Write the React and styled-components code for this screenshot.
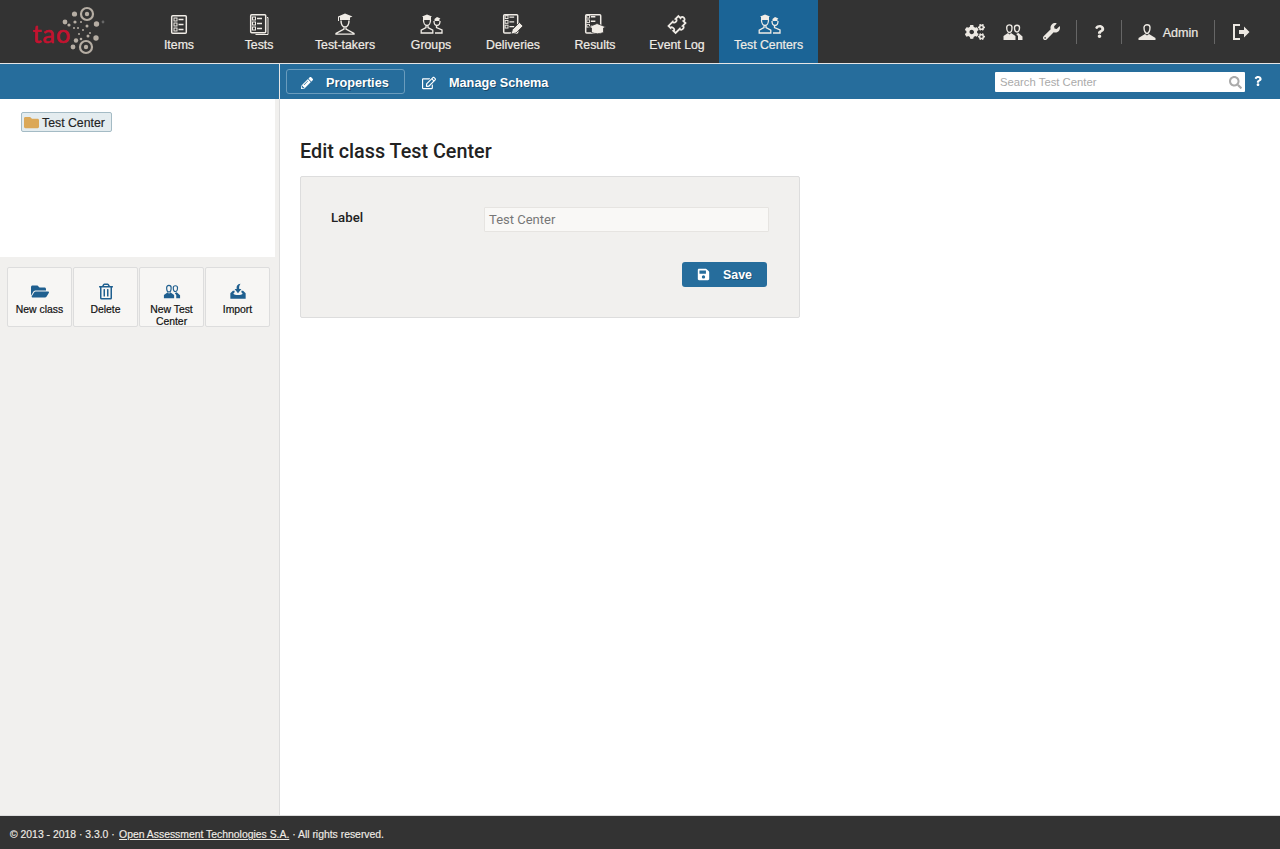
import React from 'react'
import styled, { createGlobalStyle } from 'styled-components'
import { FaCogs, FaWrench, FaQuestion, FaPencilAlt, FaRegEdit, FaSearch, FaFolder, FaFolderOpen, FaRegTrashAlt, FaSave } from 'react-icons/fa'

const Global = createGlobalStyle`
html, body { margin: 0; padding: 0; height: 100%; }
body { font-family: "Liberation Sans", Arial, sans-serif; color: #222; background: #fff; overflow: hidden; }
* { box-sizing: border-box; }
`

const Page = styled.div`
display: flex;
flex-direction: column;
height: 849px;
width: 1280px;
`
const Header = styled.header`
display: flex;
height: 64px;
flex: none;
background: #333;
border-bottom: 1px solid #e6e6e6;
`
const LogoBox = styled.div`
width: 139px;
flex: none;
padding-left: 28px;
`
const Nav = styled.nav`
display: flex;
flex: 1;
`
const NavItem = styled.div`
min-width: 80px;
width: ${props => props.w ? props.w + 'px' : 'auto'};
padding: 12px 15px 0;
display: flex;
flex-direction: column;
align-items: center;
color: #f0ece6;
font-size: 12.3px;
-webkit-text-stroke: .2px;
white-space: nowrap;
background: ${props => props.active ? '#1b6496' : 'transparent'};
svg { display: block; margin-bottom: 2px; }
`
const Tools = styled.div`
display: flex;
align-items: center;
height: 63px;
color: #ece8e2;
padding: 0 13px 0 0;
`
const Tool = styled.div`
display: flex;
align-items: center;
justify-content: center;
width: ${props => props.w}px;
height: 24px;
font-size: 12.6px;
-webkit-text-stroke: .2px;
border-right: ${props => props.sep ? '1px solid #666' : 'none'};
`
const AdminName = styled.span`
margin: 3px 0 0 7px;
`

const ActionBar = styled.div`
display: flex;
flex: none;
height: 35px;
background: #266d9c;
color: #fff;
`
const ActionLeft = styled.div`
width: 280px;
flex: none;
border-right: 1px solid #e6e6e6;
`
const Tabs = styled.div`
display: flex;
flex: 1;
align-items: center;
padding-left: 6px;
`
const Tab = styled.div`
display: flex;
align-items: center;
height: 25px;
width: ${props => props.w}px;
padding: 3px 0 0 14px;
font-size: 12.7px;
font-weight: bold;
white-space: nowrap;
border: 1px solid ${props => props.active ? '#6a9cbd' : 'transparent'};
border-radius: 3px;
margin-right: 2px;
text-shadow: 1px 1px 0 rgba(0,0,0,.35);
svg { margin-right: 13px; flex: none; }
`
const SearchBox = styled.div`
display: flex;
align-items: center;
justify-content: space-between;
width: 250px;
height: 20px;
margin: 8px 0 0;
padding: 0 3px 0 5px;
background: #fff;
border-radius: 1px;
font-size: 11.3px;
color: #aaa;
`
const HelpIcon = styled.div`
width: 26px;
margin-right: 9px;
padding-top: 12px;
display: flex;
justify-content: center;
`

const Body = styled.div`
display: flex;
flex: 1;
min-height: 0;
`
const Sidebar = styled.aside`
width: 280px;
flex: none;
background: #f1f0ee;
border-right: 1px solid #ddd;
`
const TreeArea = styled.div`
height: 158px;
width: 275px;
background: #fff;
padding: 13px 0 0 21px;
`
const TreeNode = styled.div`
display: inline-flex;
align-items: center;
width: 91px;
height: 20px;
padding: 1px 0 0 2px;
font-size: 12.3px;
-webkit-text-stroke: .15px;
color: #222;
background: #e4ecef;
border: 1px solid #a4bbc5;
border-radius: 2px;
svg { margin-right: 3px; }
`
const ActionGrid = styled.div`
display: flex;
gap: 1px;
padding: 10px 0 0 7px;
`
const ActionButton = styled.div`
width: 65px;
height: 60px;
padding-top: 15px;
display: flex;
flex-direction: column;
align-items: center;
text-align: center;
font-size: 10.4px;
-webkit-text-stroke: .2px;
line-height: 12px;
color: #111;
background: #f7f6f4;
border: 1px solid #ddd;
border-radius: 2px;
svg { flex: none; margin-bottom: 4px; height: 17px; }
`

const Main = styled.main`
flex: 1;
padding: 41px 0 0 20px;
`
const Heading = styled.h2`
margin: 0 0 12px;
font-family: Roboto, sans-serif;
font-size: 19.8px;
line-height: 24px;
font-weight: 500;
color: #222;
`
const FormCard = styled.section`
width: 500px;
height: 142px;
padding: 30px 30px 0;
background: #f1f0ee;
border: 1px solid #ddd;
border-radius: 2px;
`
const FormRow = styled.div`
display: flex;
`
const Label = styled.label`
width: 153px;
padding-top: 1px;
font-family: Roboto, sans-serif;
font-size: 13.2px;
font-weight: 500;
line-height: 20px;
`
const Input = styled.div`
width: 285px;
height: 25px;
padding-left: 4px;
background: #f9f8f6;
border: 1px solid #e6e4e1;
border-radius: 1px;
font-family: Roboto, sans-serif;
font-size: 13px;
line-height: 23px;
color: #777;
`
const SaveRow = styled.div`
display: flex;
justify-content: flex-end;
padding: 30px 2px 0 0;
`
const SaveButton = styled.div`
display: flex;
align-items: center;
width: 85px;
height: 25px;
padding-left: 15px;
background: #266d9c;
border-radius: 3px;
color: #fff;
font-size: 12.4px;
font-weight: bold;
text-shadow: 1px 1px 0 rgba(0,0,0,.3);
svg { margin-right: 13px; }
`

const Footer = styled.footer`
flex: none;
height: 34px;
padding-left: 10px;
background: #333;
border-top: 1px solid #ddd;
color: #f0ece6;
font-size: 10.4px;
-webkit-text-stroke: .15px;
line-height: 37px;
a { color: inherit; text-decoration: underline; margin-left: 1.5px; }
`

const Logo = () => (
  <svg width="80" height="60" viewBox="28 0 80 60">
    <text x="32.500" y="43" fill="#c4122f" stroke="#c4122f" strokeWidth=".6" fontFamily="Lato, sans-serif" fontSize="25" letterSpacing="1">tao</text>
    <g fill="none" stroke="#b5ada3" strokeWidth="2.2">
      <circle cx="87" cy="14" r="6" />
      <circle cx="86" cy="47" r="6" />
    </g>
    <g fill="#b5ada3">
      <circle cx="87" cy="14" r="2.2" />
      <circle cx="86" cy="47" r="2.2" />
      <circle cx="74.500" cy="14" r="2.600" />
      <circle cx="65" cy="22" r="2.400" />
      <circle cx="96.500" cy="24" r="2.700" />
      <circle cx="96" cy="38" r="2.700" />
      <circle cx="73" cy="47" r="2.400" />
      <circle cx="76" cy="40.500" r="2.200" />
      <circle cx="75" cy="22" r="1.600" />
      <circle cx="69" cy="25" r="1.600" />
      <circle cx="87" cy="26" r="1.500" />
      <circle cx="88" cy="36" r="1.500" />
      <circle cx="81" cy="39" r="1.300" />
      <circle cx="81" cy="22" r="1" />
      <circle cx="78" cy="28" r="1" />
      <circle cx="83" cy="30" r="1" />
      <circle cx="79" cy="34" r="1" />
      <circle cx="74" cy="28" r="1" />
      <circle cx="90" cy="33" r="1" />
    </g>
    <circle cx="103" cy="22" r="1.400" fill="#666" />
  </svg>
)

const Stroke = ({ size = 24, children }) => (
  <svg width={size} height={size} viewBox="0 0 24 24" fill="none" stroke="currentColor" strokeWidth="1.500">{children}</svg>
)

const ChecklistLines = () => (
  <>
    <rect x="7" y="6" width="3" height="3" strokeWidth="1" />
    <rect x="7" y="11" width="3" height="3" strokeWidth="1" />
    <rect x="7" y="16" width="3" height="3" strokeWidth="1" />
    <path d="M11.500 7.500h5M11.500 12.500h5M11.500 17.500h5" />
  </>
)

const ItemsIcon = () => (
  <Stroke><rect x="4.700" y="3.700" width="14.600" height="17.600" rx="1" /><ChecklistLines /></Stroke>
)
const TestsIcon = () => (
  <Stroke><path d="M20 5.500h1v17H8.500" strokeWidth="1" /><rect x="3.700" y="2.700" width="15" height="18" rx="1" /><g transform="translate(-1.500 -1)"><ChecklistLines /></g></Stroke>
)
const TakerIcon = () => (
  <Stroke>
    <path fill="currentColor" stroke="none" d="M12 1.500l7.500 3-2.500 1V8H7V5.500L6 5v4H5V4.500z" />
    <path d="M8 8.500c0 3.500 1.500 6.500 4 6.500s4-3 4-6.500" />
    <path d="M11 15.500v1.500l-8 4.500v.7h18v-.7L13 17v-1.500" strokeWidth="1.300" />
  </Stroke>
)
const GroupIcon = () => (
  <Stroke>
    <path fill="currentColor" stroke="none" d="M8 2.500l5 2-1 .5v3H4V5L3 4.500z" />
    <path d="M4.500 8c0 3 1.500 5.500 3.500 5.500S11.500 11 11.500 8" strokeWidth="1.300" />
    <path d="M7 14v1.500l-4.800 2.700V21h11.600v-2.800L9 15.500V14" strokeWidth="1.300" />
    <path fill="currentColor" stroke="none" d="M18 5l3.500 1.500-1 .5v2h-5V7z" />
    <path d="M15 9c0 2.500 1.200 4.500 3 4.500s3-2 3-4.500" strokeWidth="1.300" />
    <path d="M17.500 14v1.500L23 18v3h-7" strokeWidth="1.300" />
  </Stroke>
)
const DeliveriesIcon = () => (
  <Stroke>
    <rect x="2.700" y="2.700" width="14" height="18.300" rx="1" />
    <g transform="translate(-2.500 -2) scale(.95)"><ChecklistLines /></g>
    <path fill="currentColor" stroke="#333" strokeWidth=".8" d="M10 22l1.500-4.500 7-7 3.500 3.500-7 7z" />
  </Stroke>
)
const ResultsIcon = () => (
  <Stroke>
    <rect x="2.700" y="2.700" width="15" height="18.300" rx="1" />
    <g transform="translate(-2.500 -2) scale(.9)"><ChecklistLines /></g>
    <path fill="currentColor" stroke="#333" strokeWidth=".8" d="M14 11.500l9 3.500-2.500 1v4.500c-3 1.500-9 1.500-12 0V16L5.500 15z" />
  </Stroke>
)
const PuzzleIcon = () => (
  <Stroke>
    <path transform="translate(12 12.500) rotate(45)" strokeWidth="1.800" d="M-5 -7H-2c-1.500 -3.500 5.500 -3.500 4 0H5V-3c3 -1.500 3 5.500 0 4V7H2c1.500 -2.500 -5.500 -2.500 -4 0H-5V1c3 1.500 3 -5.500 0 -4z" />
  </Stroke>
)
const PersonPair = ({ color = 'currentColor', size = 20 }) => (
  <svg width={size} height={size} viewBox="0 0 20 20" fill="none" stroke={color} strokeWidth="1.400">
    <path d="M3.700 5.500C3.700 2 9 2 9 5.500c0 2.500-1 5-2.600 5S3.700 8 3.700 5.500z" />
    <path d="M11.500 5.500c0-3 5-3 5 0 0 2.500-1 4.500-2.500 4.500s-2.500-2-2.500-4.500z" />
    <path fill={color} stroke="none" d="M5 11l-4.500 3v4h12v-4L8 11l-1.500 1.500zM14 11.500l-.7.700L15 14v4h4.500v-3.500L15.500 11z" />
  </svg>
)
const AdminIcon = () => (
  <svg width="18" height="18" viewBox="0 0 18 18" fill="none" stroke="currentColor" strokeWidth="1.400">
    <path d="M6 4.500C6 .8 12 .8 12 4.500c0 3-1.300 6-3 6s-3-3-3-6z" />
    <path fill="currentColor" stroke="none" d="M7 11L.5 15v2h17v-2L11 11l-2 1.500z" />
  </svg>
)
const LogoutIcon = () => (
  <svg width="18" height="18" viewBox="0 0 18 18" fill="none" stroke="currentColor" strokeWidth="2">
    <path d="M8 2H2v14h6" />
    <path fill="currentColor" stroke="none" d="M7 7h5V3.500L17.500 9 12 14.500V11H7z" />
  </svg>
)
const ImportIcon = () => (
  <svg width="20" height="20" viewBox="0 0 20 20" fill="#1f5f8f">
    <path d="M1 12l3-3h2v2L4.500 12.500c1 2 10 2 11 0L14 11V9h2l3 3v6.500H1z" />
    <path d="M13 1C9 1.500 8 4 8.500 7H6l4 5 4-5h-2.500C11 5 11.500 3 13 1z" />
  </svg>
)

const navItems = [
  { label: 'Items', Icon: ItemsIcon },
  { label: 'Tests', Icon: TestsIcon },
  { label: 'Test-takers', Icon: TakerIcon, w: 92 },
  { label: 'Groups', Icon: GroupIcon },
  { label: 'Deliveries', Icon: DeliveriesIcon },
  { label: 'Results', Icon: ResultsIcon },
  { label: 'Event Log', Icon: PuzzleIcon, w: 84 },
  { label: 'Test Centers', Icon: GroupIcon, active: true },
]

const App = () => {
  return (
    <Page>
      <Global />
      <Header>
        <LogoBox><Logo /></LogoBox>
        <Nav>
          {navItems.map(({ label, Icon, active, w }) => (
            <NavItem key={label} active={active} w={w}><Icon />{label}</NavItem>
          ))}
        </Nav>
        <Tools>
          <Tool w={38}><FaCogs size={20} /></Tool>
          <Tool w={38}><PersonPair /></Tool>
          <Tool w={38}><FaWrench size={17} /></Tool>
          <Tool w={7} sep />
          <Tool w={45} sep><FaQuestion size={13} /></Tool>
          <Tool w={93} sep><AdminIcon /><AdminName>Admin</AdminName></Tool>
          <Tool w={52}><LogoutIcon /></Tool>
        </Tools>
      </Header>
      <ActionBar>
        <ActionLeft />
        <Tabs>
          <Tab active w={119}><FaPencilAlt size={12} />Properties</Tab>
          <Tab w={145}><FaRegEdit size={14} />Manage Schema</Tab>
        </Tabs>
        <SearchBox>Search Test Center<FaSearch size={13} color="#aaa" /></SearchBox>
        <HelpIcon><FaQuestion size={10} /></HelpIcon>
      </ActionBar>
      <Body>
        <Sidebar>
          <TreeArea>
            <TreeNode><FaFolder size={15} color="#dba858" />Test Center</TreeNode>
          </TreeArea>
          <ActionGrid>
            <ActionButton><FaFolderOpen size={18} color="#1f5f8f" />New class</ActionButton>
            <ActionButton><FaRegTrashAlt size={14} color="#1f5f8f" />Delete</ActionButton>
            <ActionButton><PersonPair color="#1f5f8f" size={18} />New Test Center</ActionButton>
            <ActionButton><ImportIcon />Import</ActionButton>
          </ActionGrid>
        </Sidebar>
        <Main>
          <Heading>Edit class Test Center</Heading>
          <FormCard>
            <FormRow>
              <Label>Label</Label>
              <Input>Test Center</Input>
            </FormRow>
            <SaveRow>
              <SaveButton><FaSave size={13} />Save</SaveButton>
            </SaveRow>
          </FormCard>
        </Main>
      </Body>
      <Footer>© 2013 - 2018 · 3.3.0 · <a>Open Assessment Technologies S.A.</a> · All rights reserved.</Footer>
    </Page>
  )
}

export default App
